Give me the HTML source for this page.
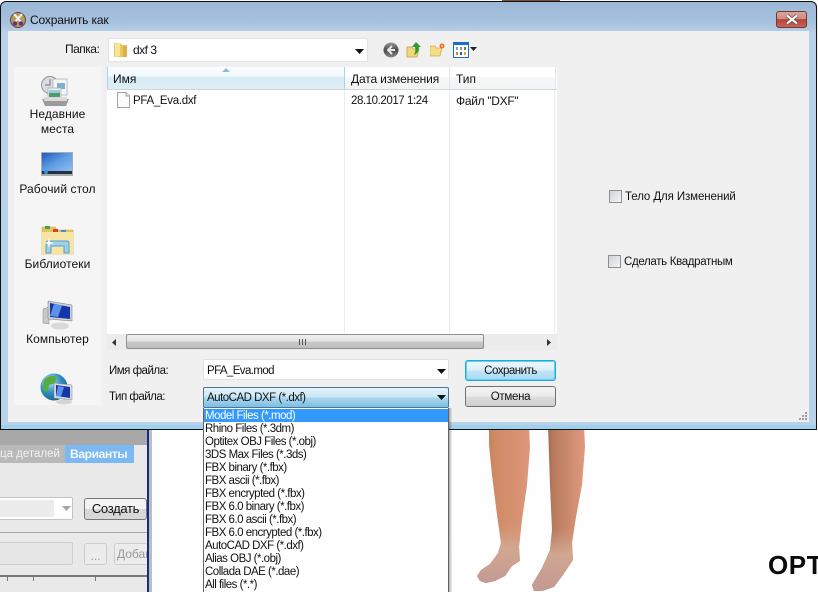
<!DOCTYPE html>
<html lang="ru"><head><meta charset="utf-8"><title>Сохранить как</title>
<style>
html,body{margin:0;padding:0;background:#fff}
#r{position:relative;width:818px;height:592px;overflow:hidden;background:#fff;font:12px "Liberation Sans",sans-serif;color:#111}
#r div,#r svg{position:absolute}
.t{white-space:nowrap;line-height:14px}
.c{text-align:center;letter-spacing:.08px}
.btn{box-sizing:border-box;border-radius:3px;text-align:center}
.li{left:205px;white-space:nowrap;line-height:13px;height:13px;color:#111;font-size:11.500px;letter-spacing:-.5px}
</style></head><body><div id="r">
<!-- background 3D scene -->
<div style="left:0;top:0;width:818px;height:592px;background:linear-gradient(#fafafa,#fff)"></div>
<div style="left:502px;top:0;width:58px;height:2px;background:#7a4f3a"></div>
<svg style="left:450px;top:425px" width="368" height="167" viewBox="0 0 368 167">
<defs><linearGradient id="l1" x1="0" x2="1" y1="0" y2="0"><stop offset="0" stop-color="#b5775a"/><stop offset=".35" stop-color="#cf8a66"/><stop offset="1" stop-color="#dd977a"/></linearGradient>
<linearGradient id="l2" x1="0" x2="1" y1="0" y2="0"><stop offset="0" stop-color="#5f3a2b"/><stop offset=".4" stop-color="#b87a5c"/><stop offset="1" stop-color="#e09a7e"/></linearGradient>
<linearGradient id="f" x1="0" x2="0" y1="0" y2="1"><stop offset="0" stop-color="#d0a08c" stop-opacity="0"/><stop offset=".62" stop-color="#d0a08c" stop-opacity="0"/><stop offset=".78" stop-color="#d2a893" stop-opacity=".95"/><stop offset="1" stop-color="#c39a93"/></linearGradient></defs>
<path id="la" d="M39 0H79L80 22L77 60L72 95L69 122L70 136L62 141L55 151L45 156L36 158L30 156L27 151L31 145L40 139L48 128L51 118L47 90L42 50L39 20Z" fill="url(#l1)"/>
<path d="M39 0H79L80 22L77 60L72 95L69 122L70 136L62 141L55 151L45 156L36 158L30 156L27 151L31 145L40 139L48 128L51 118L47 90L42 50L39 20Z" fill="url(#f)"/>
<path d="M98 0H134L135 22L132 60L126 92L122 118L123 135L113 150L104 162L92 166L84 166L82 160L92 143L100 125L102 105L100 60Z" fill="url(#l2)"/>
<path d="M98 0H134L135 22L132 60L126 92L122 118L123 135L113 150L104 162L92 166L84 166L82 160L92 143L100 125L102 105L100 60Z" fill="url(#f)"/>
</svg>
<div class="t" style="left:768px;top:550px;font-size:26px;line-height:30px;font-weight:bold;color:#0b0b0b;letter-spacing:.5px">OPT</div>
<!-- bottom-left app panel -->
<div style="left:0;top:425px;width:148px;height:167px;background:#e9e9e9"></div>
<div style="left:0;top:430px;width:148px;height:15px;background:#a8a8a8"></div>
<div style="left:0;top:445px;width:65px;height:18px;background:#b9b9b9"></div>
<div class="t" style="left:0;top:447px;color:#f1f1f1;font-size:11.500px">ца деталей</div>
<div style="left:65px;top:445px;width:69px;height:18px;background:#7cb8f2"></div>
<div class="t" style="left:70px;top:447px;color:#f4f8ff;font-weight:bold;font-size:12px;letter-spacing:-.35px">Варианты</div>
<div style="left:0;top:497px;width:73px;height:23px;box-sizing:border-box;background:#fff;border:1px solid #c4c4c4;border-left:0;border-radius:0 2px 2px 0"></div>
<div style="left:0;top:500px;width:54px;height:17px;background:#ececec"></div>
<svg style="left:62px;top:506px" width="9" height="5"><path d="M0 0H9L4.500 5Z" fill="#a5a5a5"/></svg>
<div class="btn" style="left:84px;top:498px;width:63px;height:22px;border:1px solid #777;background:linear-gradient(#f3f3f3 50%,#d8d8d8 50%);line-height:20px;font-size:13px;color:#111;letter-spacing:-.3px">Создать</div>
<div style="left:0;top:532px;width:148px;height:1px;background:#a9a9a9"></div>
<div style="left:0;top:542px;width:73px;height:23px;box-sizing:border-box;background:#e6e6e6;border:1px solid #cfcfcf;border-left:0;border-radius:0 2px 2px 0"></div>
<div class="btn" style="left:84px;top:543px;width:23px;height:22px;border:1px solid #cdcdcd;background:#ececec;line-height:24px;color:#999">...</div>
<div class="btn" style="left:114px;top:543px;width:34px;height:22px;border:1px solid #cdcdcd;border-right:0;background:#ececec;line-height:20px;color:#999;text-align:left;padding-left:2px;overflow:hidden;font-size:12px;white-space:nowrap">Добав</div>
<div style="left:0;top:575px;width:148px;height:2px;background:#777"></div>
<div style="left:7px;top:577px;width:1px;height:4px;background:#777"></div>
<div style="left:33px;top:577px;width:1px;height:4px;background:#777"></div>
<div style="left:95px;top:577px;width:1px;height:4px;background:#777"></div>
<div style="left:147px;top:425px;width:2px;height:167px;background:#0b2f93"></div>
<div style="left:149px;top:425px;width:3px;height:167px;background:#bdbdbd"></div>

<!-- window -->
<div style="left:0;top:1px;width:817px;height:429px;box-sizing:border-box;border:1px solid #111;border-radius:6px 6px 0 0;background:linear-gradient(#9bb8d6 0,#a6c1dd 20px,#b9d2ea 32px,#b8d2ea 100%)"></div>
<div style="left:1px;top:425px;width:815px;height:4px;background:#9fd0ee"></div>
<div style="left:8px;top:31px;width:801px;height:391px;background:#f0f0f0"></div>
<!-- title icon -->
<svg style="left:10px;top:12px" width="16" height="16" viewBox="0 0 16 16">
<circle cx="8" cy="8" r="7.500" fill="#b29a63" stroke="#5d4b2a"/>
<path d="M4 2L11 10M12 2L5 10" stroke="#f3f3f3" stroke-width="2"/>
<circle cx="5" cy="11.500" r="2.200" fill="#6b2c8c"/><circle cx="11" cy="11.500" r="2.200" fill="#6b2c8c"/>
</svg>
<div class="t" style="left:30px;top:13px;color:#111;font-size:12px;letter-spacing:-.15px">Сохранить как</div>
<!-- close -->
<div class="btn" style="left:776px;top:11px;width:31px;height:17px;border:1px solid #6b3a37;background:linear-gradient(#dca49c 0,#d08c82 45%,#b9402f 50%,#c7645a 100%)"></div>
<svg style="left:785px;top:14px" width="14" height="11" viewBox="0 0 14 11"><path d="M2 1.500L12 9.500M12 1.500L2 9.500" stroke="#5a4a4a" stroke-width="3.600"/><path d="M2 1.500L12 9.500M12 1.500L2 9.500" stroke="#f4f4f4" stroke-width="2.200"/></svg>

<!-- path row -->
<div class="t" style="left:65px;top:42px;letter-spacing:-.5px">Папка:</div>
<div style="left:108px;top:38px;width:260px;height:24px;box-sizing:border-box;background:#fff;border:1px solid #e4e4e4;border-radius:2px"></div>
<svg style="left:114px;top:42px" width="14" height="16" viewBox="0 0 14 16"><path d="M0 1H6L8 3H13V15H0Z" fill="#e9c85f"/><path d="M1 1H6V14L1 15Z" fill="#f6e596"/><path d="M9 4H13V15H9Z" fill="#d9b24c"/></svg>
<div class="t" style="left:133px;top:43px;letter-spacing:-.5px">dxf 3</div>
<svg style="left:355px;top:49px" width="9" height="5"><path d="M0 0H9L4.500 5Z" fill="#111"/></svg>
<!-- toolbar icons -->
<svg style="left:383px;top:42px" width="16" height="16" viewBox="0 0 16 16"><defs><linearGradient id="b" x1="0" x2="0" y1="0" y2="1"><stop offset="0" stop-color="#9a9a9a"/><stop offset=".5" stop-color="#4b4b4b"/><stop offset="1" stop-color="#888"/></linearGradient></defs><circle cx="8" cy="8" r="7.500" fill="url(#b)"/><path d="M9 4L5 8L9 12M5 8H12" stroke="#e8e8e8" stroke-width="2" fill="none"/></svg>
<svg style="left:406px;top:41px" width="16" height="17" viewBox="0 0 16 17"><path d="M1 6H6L7 8H13L11 16H1Z" fill="#f0d878" stroke="#c9a13e" stroke-width=".8"/><path d="M10 1L15 6H13Q13 12 8 14Q10 10 9 6H6Z" fill="#2f9a37"/></svg>
<svg style="left:430px;top:43px" width="16" height="14" viewBox="0 0 16 14"><path d="M0 3H5L6 5H12L10 13H0Z" fill="#f3de87" stroke="#d5ae4b" stroke-width=".8"/><circle cx="12" cy="3" r="2.500" fill="#ee6a2a"/><circle cx="12" cy="3" r="1" fill="#ffe27a"/></svg>
<svg style="left:453px;top:42px" width="16" height="16" viewBox="0 0 16 16"><rect x=".5" y=".5" width="15" height="15" fill="#fff" stroke="#1d6ccc"/><rect x="0" y="0" width="16" height="3" fill="#1d6ccc"/><rect x="3" y="5" width="2" height="3" fill="#7a9bd0"/><rect x="7" y="5" width="2" height="3" fill="#8f8fb0"/><rect x="11" y="5" width="2" height="3" fill="#3c9c48"/><rect x="3" y="10" width="2" height="3" fill="#d9803d"/><rect x="7" y="10" width="2" height="3" fill="#2c5fa8"/><rect x="11" y="10" width="2" height="3" fill="#d9a23d"/></svg>
<svg style="left:470px;top:47px" width="7" height="4"><path d="M0 0H7L3.500 4Z" fill="#222"/></svg>

<!-- sidebar -->
<div style="left:14px;top:67px;width:87px;height:338px;background:#f5f5f5"></div>
<svg style="left:39px;top:75px" width="34" height="32" viewBox="0 0 34 32">
<circle cx="11" cy="10" r="8.500" fill="#d7dde3" stroke="#8f979e"/><path d="M11 4V10H6" stroke="#778" fill="none"/>
<path d="M14 4H28V20H14Z" fill="#f6f6f6" stroke="#aaa" stroke-width=".7"/><path d="M18 8H26V14H18Z" fill="#7eb0d4"/>
<path d="M9 13H22V24H9Z" fill="#eaf2e7" stroke="#aaa" stroke-width=".7"/><path d="M10 15H21V22H10Z" fill="#4f9a6c"/><path d="M10 15H21V18H10Z" fill="#9cc9e6"/>
<path d="M3 24H30L27 31H6Z" fill="#9b9b9b"/><path d="M5 22H28V26H5Z" fill="#d9d9d9"/>
</svg>
<div class="t c" style="left:14px;top:107px;width:87px">Недавние</div>
<div class="t c" style="left:14px;top:122px;width:87px">места</div>
<svg style="left:41px;top:152px" width="32" height="25" viewBox="0 0 32 25"><defs><linearGradient id="d" x1="0" x2="1" y1="0" y2="1"><stop offset="0" stop-color="#2358b8"/><stop offset=".5" stop-color="#5c9de6"/><stop offset="1" stop-color="#8fbdec"/></linearGradient></defs><rect width="32" height="24" fill="#a8adb3"/><rect x="1" y="1" width="30" height="18" fill="url(#d)"/><rect x="1" y="19" width="30" height="3" fill="#26303f"/><circle cx="5" cy="20" r="2" fill="#3a8fd0"/></svg>
<div class="t c" style="left:14px;top:182px;width:87px">Рабочий стол</div>
<svg style="left:41px;top:225px" width="33" height="30" viewBox="0 0 33 30"><path d="M1 2H14L16 5H32V29H1Z" fill="#e7c25e" stroke="#cfa745" stroke-width=".6"/><rect x="4" y="1" width="5" height="3" fill="#3ea64a"/><rect x="12" y="4" width="5" height="3" fill="#d2452f"/><rect x="20" y="5" width="5" height="3" fill="#3f8fd4"/><path d="M1 7H32V29H1Z" fill="#f7e6a3"/><path d="M5 28V18Q5 16 7 16H26Q28 16 28 18V28H23V21H10V28Z" fill="#9fd0ea" stroke="#5b9fcc"/><path d="M8 13L9 17L13 18L9 19L8 23L7 19L3 18L7 17Z" fill="#fff"/></svg>
<div class="t c" style="left:14px;top:257px;width:87px">Библиотеки</div>
<svg style="left:41px;top:299px" width="33" height="32" viewBox="0 0 33 32"><path d="M2 10L8 8V25L2 24Z" fill="#c9c9c9" stroke="#888" stroke-width=".5"/><path d="M7 2L31 6V22L7 20Z" fill="#ccd0d6" stroke="#777" stroke-width=".5"/><path d="M9 4L29 8V20L9 18Z" fill="#1536a8"/><path d="M13 5L21 6.500L17 18L9 17Z" fill="#5c93e8"/><ellipse cx="19" cy="27" rx="9" ry="3.500" fill="#d9d9d9"/></svg>
<div class="t c" style="left:14px;top:332px;width:87px">Компьютер</div>
<svg style="left:40px;top:372px" width="34" height="33" viewBox="0 0 34 33"><defs><radialGradient id="g" cx=".35" cy=".3" r=".8"><stop offset="0" stop-color="#bfe4f7"/><stop offset=".5" stop-color="#2f8fc4"/><stop offset="1" stop-color="#1a5a86"/></radialGradient></defs><circle cx="14" cy="15" r="13.500" fill="url(#g)"/><path d="M4 8Q10 2 17 5L15 11L9 13L8 20L3 18Z" fill="#55ad3e"/><path d="M14 18L20 20L18 27L14 25Z" fill="#55ad3e"/><path d="M14 11L32 13V28L14 26Z" fill="#d5d9de" stroke="#888" stroke-width=".5"/><path d="M16 13L30 15V26L16 24Z" fill="#1536a8"/><path d="M18 14L24 15L21 25L16 24Z" fill="#5c93e8"/><ellipse cx="24" cy="30" rx="8" ry="2.500" fill="#d5d5d5"/></svg>

<!-- file list -->
<div style="left:107px;top:67px;width:450px;height:267px;background:#fff"></div>
<div style="left:107px;top:67px;width:238px;height:22px;background:linear-gradient(#f8fcfe 0,#f2f9fd 9px,#d8ecf6 10px,#dcedf6 100%)"></div>
<div style="left:107px;top:67px;width:1px;height:22px;background:#a8d4ec"></div>
<div style="left:344px;top:67px;width:1px;height:22px;background:#a8d4ec"></div>
<div style="left:345px;top:77px;width:211px;height:12px;background:linear-gradient(#f6f7f8,#f2f3f4)"></div>
<div style="left:449px;top:67px;width:1px;height:22px;background:#e4e6e8"></div>
<div style="left:555px;top:67px;width:1px;height:22px;background:#e4e6e8"></div>
<div style="left:107px;top:89px;width:450px;height:1px;background:#d5d5d5"></div>
<div style="left:344px;top:90px;width:1px;height:244px;background:#e4eefa"></div>
<div style="left:449px;top:90px;width:1px;height:244px;background:#e4eefa"></div>
<div style="left:554px;top:90px;width:1px;height:244px;background:#e4eefa"></div>
<svg style="left:222px;top:68px" width="8" height="4"><path d="M0 4L4 0L8 4Z" fill="#9cb7d2"/></svg>
<div class="t" style="left:113px;top:72px">Имя</div>
<div class="t" style="left:351px;top:72px;letter-spacing:-.15px">Дата изменения</div>
<div class="t" style="left:456px;top:72px">Тип</div>
<svg style="left:117px;top:92px" width="13" height="16" viewBox="0 0 13 16"><path d="M.5.500H9L12.500 4V15.500H.5Z" fill="#fbfbfb" stroke="#a2a2a2"/><path d="M9 .500V4H12.500" fill="#e8e8e8" stroke="#a2a2a2"/></svg>
<div class="t" style="left:133px;top:94px;font-size:11.500px;letter-spacing:-.3px">PFA_Eva.dxf</div>
<div class="t" style="left:351px;top:94px;font-size:11.500px;letter-spacing:-.43px">28.10.2017 1:24</div>
<div class="t" style="left:456px;top:94px;letter-spacing:-.3px">Файл "DXF"</div>

<!-- horizontal scrollbar -->
<div style="left:107px;top:334px;width:450px;height:16px;background:#ececec"></div>
<svg style="left:112px;top:339px" width="4" height="7"><path d="M4 0V7L0 3.500Z" fill="#333"/></svg>
<svg style="left:547px;top:339px" width="4" height="7"><path d="M0 0V7L4 3.500Z" fill="#333"/></svg>
<div style="left:126px;top:334px;width:358px;height:15px;box-sizing:border-box;border:1px solid #8f8f8f;border-radius:2px;background:linear-gradient(#f0f0f0,#e2e2e2 50%,#c9c9c9 51%,#bdbdbd)"></div>
<div style="left:299px;top:339px;width:1px;height:6px;background:#555;box-shadow:3px 0 #555,6px 0 #555"></div>

<!-- filename rows -->
<div class="t" style="left:109px;top:364px;font-size:11.500px;letter-spacing:-.5px">Имя файла:</div>
<div class="t" style="left:109px;top:390px;font-size:11.500px;letter-spacing:-.5px">Тип файла:</div>
<div style="left:203px;top:359px;width:246px;height:21px;box-sizing:border-box;background:#fff;border:1px solid #e0e0e0;border-radius:2px"></div>
<div class="t" style="left:207px;top:364px;font-size:11.500px;letter-spacing:-.6px">PFA_Eva.mod</div>
<svg style="left:437px;top:369px" width="9" height="5"><path d="M0 0H9L4.500 5Z" fill="#111"/></svg>
<div style="left:203px;top:387px;width:246px;height:21px;box-sizing:border-box;border:1px solid #4d7590;border-radius:2px;background:linear-gradient(#e6f4fb,#cbe6f5 45%,#a5d6ef 55%,#80bee2)"></div>
<div class="t" style="left:207px;top:391px;font-size:11.500px;letter-spacing:-.5px">AutoCAD DXF (*.dxf)</div>
<svg style="left:437px;top:395px" width="9" height="5"><path d="M0 0H9L4.500 5Z" fill="#111"/></svg>
<div class="btn" style="left:465px;top:360px;width:91px;height:21px;border:1px solid #25a6df;box-shadow:inset 0 0 0 1px #5fd0f5;background:linear-gradient(#eef8fd,#dcf0fa 45%,#bfe3f6 55%,#a8d9f3);line-height:20px;font-size:11.500px;letter-spacing:-.5px">Сохранить</div>
<div class="btn" style="left:465px;top:386px;width:91px;height:21px;border:1px solid #707070;background:linear-gradient(#f3f3f3,#ebebeb 45%,#dcdcdc 55%,#cfcfcf);line-height:20px;font-size:11.500px;letter-spacing:-.3px">Отмена</div>
<!-- checkboxes -->
<div style="left:609px;top:190px;width:13px;height:13px;box-sizing:border-box;border:1px solid #8e8f8f;background:linear-gradient(135deg,#cfd3d8,#f4f5f6)"></div>
<div class="t" style="left:625px;top:190px;font-size:11.500px;letter-spacing:-.1px">Тело Для Изменений</div>
<div style="left:608px;top:255px;width:13px;height:13px;box-sizing:border-box;border:1px solid #8e8f8f;background:linear-gradient(135deg,#cfd3d8,#f4f5f6)"></div>
<div class="t" style="left:624px;top:255px;font-size:11.500px;letter-spacing:-.33px">Сделать Квадратным</div>
<!-- grip -->
<svg style="left:798px;top:411px" width="10" height="10"><g fill="#a0a0a0"><rect x="7" y="1" width="2" height="2"/><rect x="4" y="4" width="2" height="2"/><rect x="7" y="4" width="2" height="2"/><rect x="1" y="7" width="2" height="2"/><rect x="4" y="7" width="2" height="2"/><rect x="7" y="7" width="2" height="2"/></g></svg>

<!-- dropdown -->
<div style="left:449px;top:408px;width:3px;height:184px;background:linear-gradient(90deg,rgba(0,0,0,.32),rgba(0,0,0,.04))"></div>
<div style="left:203px;top:408px;width:246px;height:184px;background:#fff;border-left:1px solid #646464;border-right:1px solid #646464;box-sizing:border-box"></div>
<div style="left:204px;top:409px;width:244px;height:13px;background:#3399ff"></div>
<div class="li" style="top:410px;color:#fff">Model Files (*.mod)</div>
<div class="li" style="top:423px">Rhino Files (*.3dm)</div>
<div class="li" style="top:436px">Optitex OBJ Files (*.obj)</div>
<div class="li" style="top:449px">3DS Max Files (*.3ds)</div>
<div class="li" style="top:462px">FBX binary (*.fbx)</div>
<div class="li" style="top:475px">FBX ascii (*.fbx)</div>
<div class="li" style="top:488px">FBX encrypted (*.fbx)</div>
<div class="li" style="top:501px">FBX 6.0 binary (*.fbx)</div>
<div class="li" style="top:514px">FBX 6.0 ascii (*.fbx)</div>
<div class="li" style="top:527px">FBX 6.0 encrypted (*.fbx)</div>
<div class="li" style="top:540px">AutoCAD DXF (*.dxf)</div>
<div class="li" style="top:553px">Alias OBJ (*.obj)</div>
<div class="li" style="top:566px">Collada DAE (*.dae)</div>
<div class="li" style="top:579px">All files (*.*)</div>
</div></body></html>
